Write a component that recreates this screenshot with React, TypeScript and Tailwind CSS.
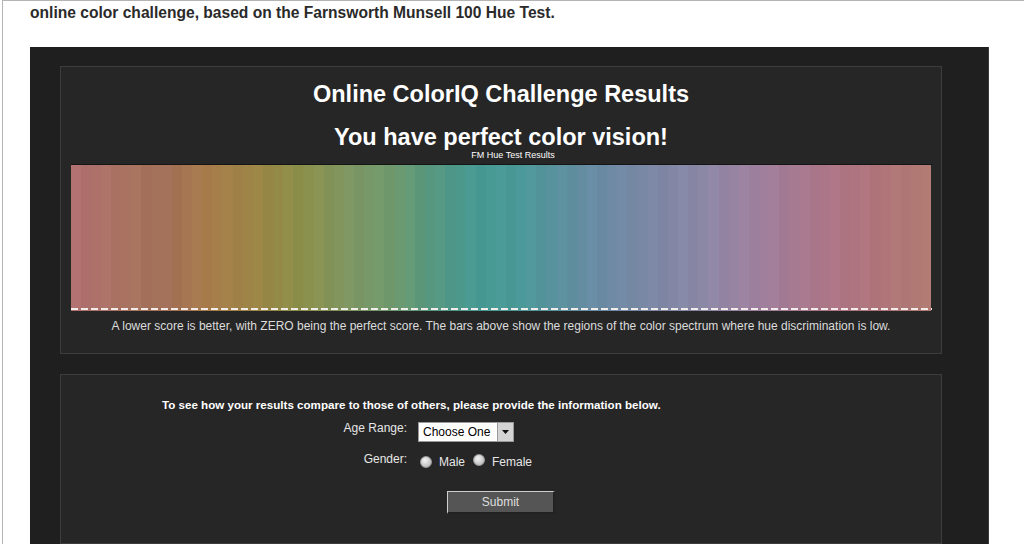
import React from 'react';

// key colours sampled along the FM hue strip, left to right
const stops: [number, number, number][] = [
  [176, 112, 112], [170, 115, 98], [162, 112, 88], [168, 125, 74], [156, 133, 70],
  [140, 143, 74], [128, 150, 96], [112, 154, 110], [86, 151, 128], [70, 154, 147],
  [76, 153, 153], [95, 143, 160], [111, 138, 165], [126, 135, 165], [139, 136, 166],
  [155, 130, 160], [166, 122, 146], [173, 117, 133], [176, 117, 122], [176, 122, 114],
];

const STRIPES = 85;

const stripeColor = (i: number) => {
  const t = (i / (STRIPES - 1)) * (stops.length - 1);
  const a = Math.floor(t);
  const b = Math.min(a + 1, stops.length - 1);
  const f = t - a;
  const shade = i % 3 === 0 ? 2 : i % 3 === 1 ? -2 : 0;
  const c = stops[a].map((v, k) => Math.round(v + (stops[b][k] - v) * f + shade));
  return `rgb(${c[0]}, ${c[1]}, ${c[2]})`;
};

const Radio = () => (
  <span className="inline-block w-[12px] h-[12px] rounded-full border border-[#9a9a9a] bg-[radial-gradient(circle_at_40%_35%,#f4f4f4,#c8c8c8_60%,#a8a8a8)]" />
);

const App: React.FC = () => {
  return (
    <div className="w-[1024px] h-[544px] overflow-hidden bg-white font-['Liberation_Sans',Arial,sans-serif]">
      <div className="ml-[2px] h-full border-l border-t border-[#b4b4b4] pl-[27px]">
        <p className="pt-[3px] text-[15.6px] leading-[18px] font-bold text-[#2a2a2a]">
          online color challenge, based on the Farnsworth Munsell 100 Hue Test.
        </p>

        <div className="mt-[25px] w-[959px] h-[500px] bg-[#1f1f1f] border-r border-[#3a3a3a] pl-[30px] pt-[19px]">
          {/* results panel */}
          <div className="w-[882px] border border-[#3d3d3d] bg-[#262626] flex flex-col items-center pt-[14px] pb-[20px]">
            <h1 className="text-[23.5px] leading-[27px] font-bold text-white">Online ColorIQ Challenge Results</h1>
            <h2 className="mt-[17px] text-[23.5px] leading-[24px] font-bold text-white">You have perfect color vision!</h2>
            <p className="pl-[24px] text-[9px] leading-[12px] font-medium text-white">FM Hue Test Results</p>

            <div className="relative mt-[3px] w-[861px] h-[147px] flex border-t border-[#151515]">
              {Array.from({ length: STRIPES }).map((_, i) => (
                <div key={i} className="flex-1 h-full" style={{ backgroundColor: stripeColor(i) }} />
              ))}
              <svg className="absolute left-0 bottom-[1px]" width="861" height="2">
                <line x1="0" y1="1" x2="861" y2="1" stroke="#f2ecea" strokeWidth="2" strokeDasharray="7 3" />
              </svg>
            </div>

            <p className="mt-[8px] text-[12px] leading-[14px] text-[#dcdcdc]">
              A lower score is better, with ZERO being the perfect score. The bars above show the regions of the color spectrum where hue discrimination is low.
            </p>
          </div>

          {/* demographics panel */}
          <div className="mt-[20px] w-[882px] h-[170px] border border-[#3d3d3d] bg-[#262626] pl-[101px] pt-[22px]">
            <p className="text-[11.6px] leading-[16px] font-bold text-white">
              To see how your results compare to those of others, please provide the information below.
            </p>

            <div className="mt-[9px] grid grid-cols-[245px_auto] gap-x-[11px] items-center text-[12px] text-[#e6e6e6]">
              <span className="text-right self-start -mt-[3px]">Age Range:</span>
              <div className="flex w-[96px] h-[20px] bg-white border border-[#9a9a9a]">
                <span className="flex-1 pl-[4px] text-[12px] leading-[18px] text-black">Choose One</span>
                <span className="w-[16px] h-[18px] bg-[#d4d4d4] border-l border-[#9a9a9a] flex items-center justify-center">
                  <svg width="7" height="4" viewBox="0 0 7 4">
                    <path d="M0 0h7L3.5 4z" fill="#111" />
                  </svg>
                </span>
              </div>

              <span className="mt-[8px] text-right self-start">Gender:</span>
              <div className="mt-[11px] ml-[2px] flex items-center text-[12px] text-[#e6e6e6]">
                <Radio />
                <span className="ml-[7px]">Male</span>
                <span className="ml-[8px]"><Radio /></span>
                <span className="ml-[7px]">Female</span>
              </div>
            </div>

            <div className="mt-[20px] ml-[285px] w-[108px] h-[23px] bg-[#555555] border-t border-l border-[#cfcfcf] border-r-2 border-b-2 border-r-[#222] border-b-[#222] flex items-center justify-center text-[12px] text-[#dedede]">
              Submit
            </div>
          </div>
        </div>
      </div>
    </div>
  );
};

export default App;
